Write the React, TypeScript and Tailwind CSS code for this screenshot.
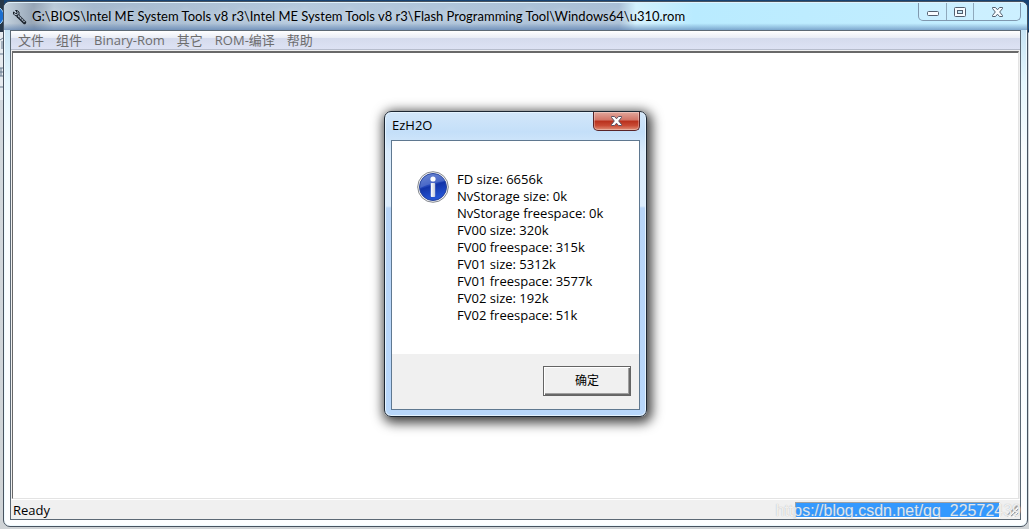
import React, { useState } from "react";

const menuItems = ["文件", "组件", "Binary-Rom", "其它", "ROM-编译", "帮助"];

const sizes = [
  "FD size: 6656k",
  "NvStorage size: 0k",
  "NvStorage freespace: 0k",
  "FV00 size: 320k",
  "FV00 freespace: 315k",
  "FV01 size: 5312k",
  "FV01 freespace: 3577k",
  "FV02 size: 192k",
  "FV02 freespace: 51k",
];

function WrenchIcon() {
  return (
    <svg width="16" height="16" viewBox="0 0 16 16" className="shrink-0">
      <path d="M6 7 L12.500 13.500" stroke="#1b222b" strokeWidth="3.400" strokeLinecap="round" />
      <path d="M6 6.500 L12.500 13" stroke="#a3b0bf" strokeWidth="1.500" strokeDasharray="2 0.600" />
      <path d="M3.500 1.500 L5 3 V4.500 H3.500 L1.500 3 V5 L3 6.500 L5.500 7 M3.500 1.500 H5 L7 3 L7 6" fill="none" stroke="#1b222b" strokeWidth="1" />
    </svg>
  );
}

function CloseGlyph({ fill, stroke }: { fill: string; stroke: string }) {
  return (
    <svg width="13" height="12" viewBox="0 0 13 12">
      <path
        d="M1.500 1.500 H4.500 L6.500 3.800 L8.500 1.500 H11.500 V2.500 L8.700 6 L11.500 9.500 V10.500 H8.500 L6.500 8.200 L4.500 10.500 H1.500 V9.500 L4.300 6 L1.500 2.500 Z"
        fill={fill}
        stroke={stroke}
        strokeLinejoin="round"
      />
    </svg>
  );
}

function InfoIcon() {
  return (
    <svg width="32" height="32" viewBox="0 0 32 32" className="shrink-0">
      <defs>
        <linearGradient id="ball" x1="0" y1="0" x2="0.3" y2="1">
          <stop offset="0" stopColor="#5577cf" />
          <stop offset="0.5" stopColor="#2448bb" />
          <stop offset="0.55" stopColor="#1234a8" />
          <stop offset="1" stopColor="#2454d4" />
        </linearGradient>
        <linearGradient id="stem" x1="0" y1="0" x2="1" y2="0">
          <stop offset="0" stopColor="#ffffff" />
          <stop offset="1" stopColor="#c4cbdc" />
        </linearGradient>
      </defs>
      <circle cx="16" cy="16" r="15.300" fill="#f4f4f4" stroke="#858990" />
      <circle cx="16" cy="16" r="13.500" fill="url(#ball)" stroke="#26439c" />
      <path d="M3 17 C3 8 9 3 16 3 C22 3 26 6 28 10 C20 11 12 13 3 17 Z" fill="#ffffff" opacity="0.16" />
      <circle cx="16" cy="8" r="2.600" fill="#ffffff" />
      <rect x="13.800" y="12" width="4.400" height="14" rx="0.800" fill="url(#stem)" />
    </svg>
  );
}

function WindowButtons() {
  return (
    <div className="flex h-[18px] shrink-0 rounded-b-[5px] border border-t-0 border-[#8098ae] bg-white/15">
      <button type="button" aria-label="Minimize" className="flex w-7 items-center justify-center border-r border-[#8fa9bc]">
        <svg width="12" height="5" viewBox="0 0 12 5" className="mt-1">
          <rect x="0.500" y="0.500" width="11" height="4" rx="1" fill="#f8fcff" stroke="#535f6e" />
        </svg>
      </button>
      <button type="button" aria-label="Maximize" className="flex w-[27px] items-center justify-center border-r border-[#8fa9bc]">
        <svg width="12" height="10" viewBox="0 0 12 10">
          <rect x="0.500" y="0.500" width="11" height="9" rx="1" fill="#f8fcff" stroke="#535f6e" />
          <rect x="3.500" y="3.500" width="5" height="3" fill="#c5e6f5" stroke="#535f6e" />
        </svg>
      </button>
      <button type="button" aria-label="Close" className="flex w-[46px] items-center justify-center">
        <CloseGlyph fill="#f8fcff" stroke="#535f6e" />
      </button>
    </div>
  );
}

function InfoDialog({ onClose }: { onClose: () => void }) {
  return (
    <div
      role="dialog"
      aria-labelledby="dialog-title"
      className="w-[263px] rounded-[7px] border border-[#1d2733] bg-[linear-gradient(180deg,#d3e7fa_0px,#c4dff9_20px,#d9ebfc_40px,#dcedfd_94px,#b8d5f8_96px,#b8d7fb_100%)] px-1.5 pb-1.5 shadow-[inset_0_0_0_1px_#e4f3ff,2px_3px_12px_3px_rgba(0,0,0,0.75)]"
    >
      <div className="flex h-7 items-start justify-between">
        <h2 id="dialog-title" className="pt-0.5 pl-px leading-[22px]">
          EzH2O
        </h2>
        <button
          type="button"
          aria-label="Close"
          onClick={onClose}
          className="flex h-[19px] w-[47px] items-center justify-center rounded-b-[5px] border border-t-0 border-[#5a2428] bg-[linear-gradient(180deg,#e2a79c_0%,#d27466_45%,#b8301c_50%,#c84a34_75%,#e09078_100%)] shadow-[inset_0_0_0_1px_rgba(255,255,255,0.3)]"
        >
          <CloseGlyph fill="#ffffff" stroke="#5b5263" />
        </button>
      </div>
      <div className="border border-[#5f7890] bg-white">
        <div className="flex gap-2 py-[30px] pl-[25px]">
          <InfoIcon />
          <div>
            {sizes.map((line) => (
              <p key={line} className="leading-[17px]">
                {line}
              </p>
            ))}
          </div>
        </div>
        <div className="flex justify-end bg-[#f0f0f0] pt-3 pr-2 pb-[13px]">
          <button
            type="button"
            onClick={onClose}
            className="h-[30px] w-[88px] border border-[#646464] bg-[#f0f0f0] text-xs shadow-[inset_1px_1px_0_#ffffff,inset_-1px_-1px_0_#696969,inset_-2px_-2px_0_#a0a0a0]"
          >
            确定
          </button>
        </div>
      </div>
    </div>
  );
}

export default function App() {
  const [open, setOpen] = useState(true);

  return (
    <div className="relative h-screen overflow-hidden bg-[linear-gradient(180deg,#164272_0px,#1b4c80_28px,#0e2d52_32px,#d3d9df_33px,#cfd3d6_100%)] pt-px pr-px pb-0.5 pl-[3px] font-['Open_Sans','Noto_Sans_CJK_SC',sans-serif] text-[13px] text-black">
      {/* edge of the window behind */}
      <svg width="4" height="100" className="absolute top-0 left-0">
        <rect width="4" height="32" fill="#27384a" />
        <circle cx="-6" cy="16" r="10" fill="#1d6fd0" stroke="#a9d2f3" />
        <rect y="32" width="4" height="68" fill="#e6ebef" />
        <path d="M0 40 L3 38 M2 41 V49 M0 54 H4 M0 68 H4 M1 68 V76 M0 72 H3 M0 76 H4 M0 87 H4" stroke="#64788d" />
      </svg>

      <div className="relative flex h-full flex-col rounded-[7px] border border-[#47525f] bg-[linear-gradient(180deg,#a9c3dd_0px,#c9e5f5_30px,#e4f6fd_80px,#f8fcfe_150px,#fdfeff_100%)] px-1.5 pb-1.5 shadow-[inset_0_0_0_1px_#eefaff]">
        <header className="-mx-1.5 flex h-7 shrink-0 items-start justify-between rounded-t-[6px] border-t border-[#e0f2fc] bg-[linear-gradient(180deg,transparent_75%,rgba(70,110,165,0.55)_100%),linear-gradient(90deg,#c5d3df_0px,#95a4b5_30px,#b9c9d8_50px,#a5b9ce_90px,#b5c9dd_300px,#a9bfd6_615px,#d2f1fd_632px,#b9ebff_690px,#c5eeff_100%)] pr-1.5 pl-2">
          <div className="flex min-w-0 items-start gap-1 pt-0.5">
            <div className="pt-1">
              <WrenchIcon />
            </div>
            <h1 className="truncate font-['Lato','Noto_Sans_CJK_SC',sans-serif] leading-[22px] [text-shadow:0_0_6px_rgba(255,255,255,0.7)]">
              G:\BIOS\Intel ME System Tools v8 r3\Intel ME System Tools v8 r3\Flash Programming Tool\Windows64\u310.rom
            </h1>
          </div>
          <WindowButtons />
        </header>

        <div className="flex min-h-0 grow flex-col border border-[#5c6975] bg-[#f0f0f0]">
          <nav className="flex h-[19px] shrink-0 items-center border-b border-[#b6bccc] bg-[linear-gradient(180deg,#ffffff_0%,#e9edf6_38%,#d5dbed_40%,#dde2f4_100%)] pl-px text-[#6d6d6d]">
            {menuItems.map((item) => (
              <button key={item} type="button" className="px-1.5 leading-[18px] whitespace-nowrap">
                {item}
              </button>
            ))}
          </nav>
          <main className="mx-px mt-px grow border border-t-2 border-[#696969] border-r-[#e3e3e3] border-b-[#e3e3e3] bg-white" />
          <footer className="flex h-5 shrink-0 items-center justify-between border-t border-white pl-0.5">
            <span className="pt-0.5">Ready</span>
            <div className="flex items-end gap-1">
              <div
                role="progressbar"
                aria-label="Progress"
                aria-valuenow={100}
                className="h-4 w-[205px] border border-[#a0a0a0] border-r-white border-b-white bg-[#3399ff]"
              />
              <svg width="16" height="15" viewBox="0 0 16 15">
                <path d="M3 13 L14 2 M7 13 L14 6 M11 13 L14 10" stroke="#a0a0a0" strokeWidth="1.600" />
                <path d="M5 14 L15 4 M9 14 L15 8" stroke="#ffffff" />
              </svg>
            </div>
          </footer>
        </div>

        {open && (
          <div className="absolute inset-0 flex items-center justify-center pb-px">
            <InfoDialog onClose={() => setOpen(false)} />
          </div>
        )}
      </div>

      <span className="pointer-events-none absolute right-2 bottom-2 font-['Liberation_Sans',sans-serif] text-base leading-5 text-white/80 [text-shadow:0_0_1px_rgba(120,120,120,0.6)]">
        https://blog.csdn.net/qq_22572439
      </span>
    </div>
  );
}
